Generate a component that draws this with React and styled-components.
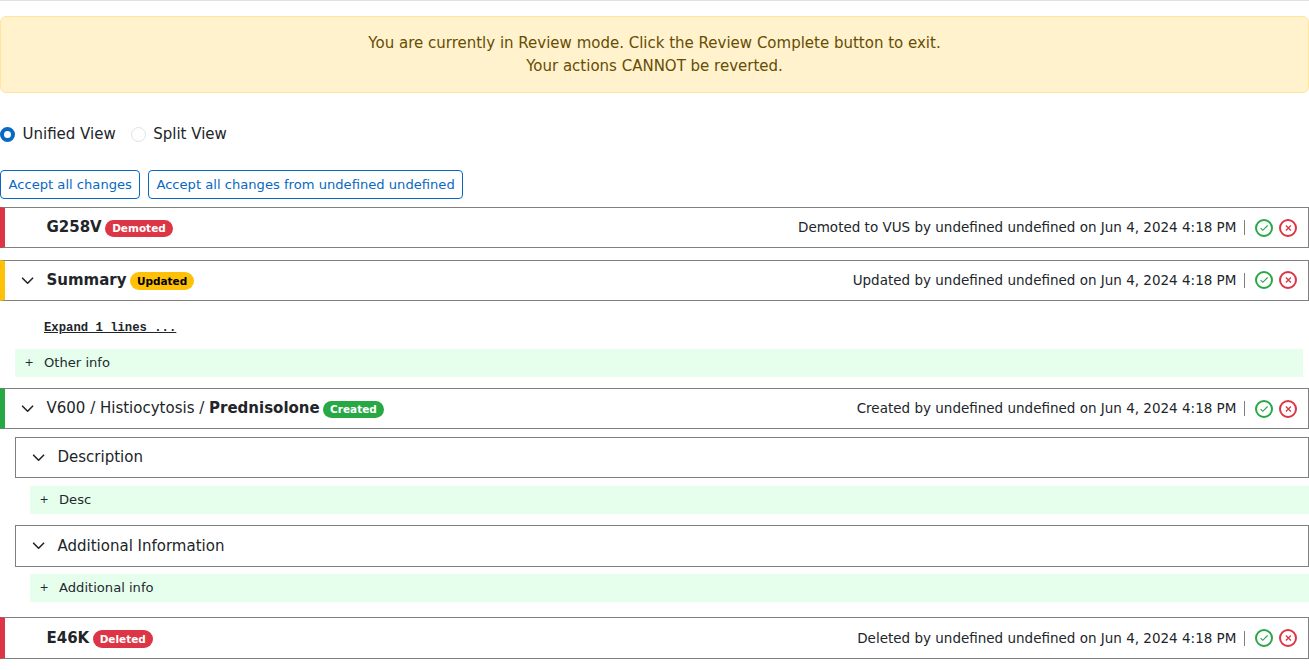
import React from "react";
import styled, { createGlobalStyle } from "styled-components";

const GlobalStyle = createGlobalStyle`
  * { box-sizing: border-box; }
  body {
    margin: 0;
    background: #fff;
    color: #212529;
    font: 15px/22.5px "DejaVu Sans", sans-serif;
    overflow: hidden;
  }
`;

const Page = styled.main`
  display: flex;
  flex-direction: column;
  border-top: 1px solid #dee2e6;
`;

const Alert = styled.div`
  margin-top: 15px;
  height: 77px;
  padding: 15px;
  text-align: center;
  color: #664d03;
  background: #fff2cd;
  border: 1px solid #ffe69c;
  border-radius: 6px;
`;

const ViewOptions = styled.div`
  display: flex;
  gap: 15px;
  margin-top: 30px;
  height: 23px;
`;

const Option = styled.label`
  display: flex;
  align-items: flex-start;
  gap: 7.5px;
`;

const Radio = styled.input`
  appearance: none;
  width: 15px;
  height: 15px;
  margin: 4px 0 0;
  border: 1px solid #dee2e6;
  border-radius: 50%;
  background: #fff;
  &:checked {
    border: 4px solid #0968c3;
  }
`;

const Actions = styled.div`
  display: flex;
  gap: 7.5px;
  margin-top: 24px;
`;

const ActionButton = styled.button`
  height: 29px;
  padding: 0 7.5px;
  border: 1px solid #0968c3;
  border-radius: 4px;
  background: #fff;
  color: #0968c3;
  font: 13.125px/20px "DejaVu Sans", sans-serif;
  white-space: nowrap;
`;

const tones = { danger: "#dc3545", warning: "#ffc107", success: "#28a745" };

const Row = styled.section`
  display: flex;
  align-items: center;
  height: ${(p) => p.$height || 41}px;
  margin-top: ${(p) => p.$gap}px;
  margin-left: ${(p) => (p.$tone ? 0 : 15)}px;
  padding-right: 11px;
  padding-left: 16px;
  border: 1px solid gray;
  ${(p) => p.$tone && `border-left: 5px solid ${tones[p.$tone]};`}
`;

const Toggle = styled.span`
  display: flex;
  width: 25.5px;
  flex: none;
  padding-bottom: 1px;
`;

const Title = styled.div`
  display: flex;
  align-items: center;
  gap: 3.5px;
  flex: 1;
  white-space: pre;
  padding-bottom: ${(p) => (p.$tall ? 0 : 1)}px;
`;

const Badge = styled.span`
  height: ${(p) => p.$height || 17}px;
  margin-top: ${(p) => (p.$height ? 1.5 : 3)}px;
  padding: 0 6.9px;
  border-radius: 9px;
  background: ${(p) => tones[p.$tone]};
  color: ${(p) => (p.$tone === "warning" ? "#000" : "#fff")};
  font-size: 10.5px;
  font-weight: 700;
  line-height: ${(p) => p.$height || 17}px;
`;

const Meta = styled.span`
  font-size: 13.5px;
  white-space: nowrap;
`;

const Divider = styled.span`
  width: 1px;
  height: 15px;
  margin: 0 10px 0 7.6px;
  background: #808080;
`;

const RoundButton = styled.button`
  display: flex;
  align-items: center;
  justify-content: center;
  width: 18px;
  height: 18px;
  margin: ${(p) => (p.$raised ? 0 : 1)}px 0 ${(p) => (p.$raised ? 1 : 0)}px ${(p) => (p.$tone === "danger" ? 6 : 0)}px;
  padding: 0;
  border: 2px solid ${(p) => tones[p.$tone]};
  border-radius: 50%;
  background: transparent;
  color: ${(p) => tones[p.$tone]};
`;

const Expand = styled.div`
  margin: 16px 0 0 44px;
  height: 22px;
  font: 700 12.25px/23px "Liberation Mono", monospace;
  text-decoration: underline;
`;

const Added = styled.div`
  display: flex;
  align-items: center;
  height: 28px;
  margin: ${(p) => p.$gap}px ${(p) => (p.$nested ? 0 : 6)}px 0 ${(p) => (p.$nested ? 30 : 15)}px;
  padding-left: 9.5px;
  background: #e6ffed;
  color: #24292e;
  font-size: 13.125px;
`;

const Sign = styled.span`
  width: 19.5px;
  font-size: 11px;
`;

const Chevron = () => (
  <svg width="13" height="13" viewBox="0 0 13 13" fill="none" stroke="currentColor" strokeWidth="1.6" strokeLinecap="round" strokeLinejoin="round">
    <path d="M1.6 4.2l5 5 5-5" />
  </svg>
);

const Check = () => (
  <svg width="10" height="10" viewBox="0 0 10 10" fill="none" stroke="currentColor" strokeWidth="1.15">
    <path d="M1.6 5.1l2.2 2.2L8.6 2.5" />
  </svg>
);

const Cross = () => (
  <svg width="10" height="10" viewBox="0 0 10 10" fill="none" stroke="currentColor" strokeWidth="1.3">
    <path d="M2.9 2.5l5 5M7.9 2.5l-5 5" />
  </svg>
);

function Change({ tone, gap, height, open, path, name, status, badgeHeight, raised, note }) {
  return (
    <Row $tone={tone} $gap={gap} $height={height}>
      <Toggle>{open && <Chevron />}</Toggle>
      <Title $tall={height === 42}>
        <span>{path}<b>{name}</b></span>
        <Badge $tone={tone} $height={badgeHeight}>{status}</Badge>
      </Title>
      <Meta>{note} by undefined undefined on Jun 4, 2024 4:18 PM</Meta>
      <Divider />
      <RoundButton $tone="success" $raised={raised} aria-label="Accept"><Check /></RoundButton>
      <RoundButton $tone="danger" $raised={raised} aria-label="Reject"><Cross /></RoundButton>
    </Row>
  );
}

function Section({ title, gap, height }) {
  return (
    <Row $gap={gap} $height={height}>
      <Toggle><Chevron /></Toggle>
      <Title $tall={height === 42}>{title}</Title>
    </Row>
  );
}

function AddedLine({ children, gap, nested }) {
  return (
    <Added $gap={gap} $nested={nested}>
      <Sign>+</Sign>
      {children}
    </Added>
  );
}

export default function App() {
  return (
    <Page>
      <GlobalStyle />
      <Alert>
        You are currently in Review mode. Click the Review Complete button to exit.
        <br />
        Your actions CANNOT be reverted.
      </Alert>
      <ViewOptions>
        <Option><Radio type="radio" name="view" defaultChecked />Unified View</Option>
        <Option><Radio type="radio" name="view" />Split View</Option>
      </ViewOptions>
      <Actions>
        <ActionButton>Accept all changes</ActionButton>
        <ActionButton>Accept all changes from undefined undefined</ActionButton>
      </Actions>
      <Change tone="danger" gap={8} name="G258V" status="Demoted" note="Demoted to VUS" />
      <Change tone="warning" gap={12} open name="Summary" status="Updated" badgeHeight={18} raised note="Updated" />
      <Expand>Expand 1 lines ...</Expand>
      <AddedLine gap={10}>Other info</AddedLine>
      <Change tone="success" gap={11} open path="V600 / Histiocytosis / " name="Prednisolone" status="Created" note="Created" />
      <Section title="Description" gap={8} />
      <AddedLine gap={8} nested>Desc</AddedLine>
      <Section title="Additional Information" gap={11} height={42} />
      <AddedLine gap={7} nested>Additional info</AddedLine>
      <Change tone="danger" gap={15} height={42} name="E46K" status="Deleted" badgeHeight={18} raised note="Deleted" />
    </Page>
  );
}
